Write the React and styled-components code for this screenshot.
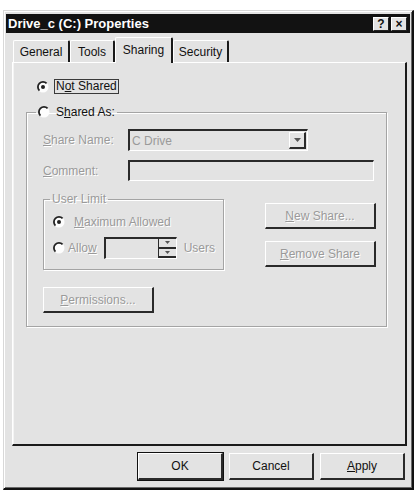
import styled, { createGlobalStyle } from "styled-components"

const Global = createGlobalStyle`
    body {
        margin: 0;
        background: #fff;
        font-family: "Liberation Sans", Arial, sans-serif;
        font-size: 12px;
        color: #111;
    }
`

const Janela = styled.div`
    box-sizing: border-box;
    margin: 10px 0 0 3px;
    width: 411px;
    height: 480px;
    background: #e3e3e3;
    border-top: 1px solid #d8d8d8;
    border-left: 1px solid #d8d8d8;
    border-right: 2px solid #111;
    border-bottom: 2px solid #111;
    box-shadow: inset 1px 1px 0 #fff, inset -1px -1px 0 #6a6a6a;
    padding: 3px 2px 2px 2px;
    display: flex;
    flex-direction: column;
`

const BarraTitulo = styled.div`
    height: 19px;
    background: #121212;
    color: #fff;
    font-weight: bold;
    font-size: 13px;
    display: flex;
    align-items: center;
    justify-content: space-between;
    padding: 0 3px 0 2px;
`

const BotoesTitulo = styled.div`
    display: flex;
    gap: 2px;
`

const BotaoTitulo = styled.div`
    box-sizing: border-box;
    width: 16px;
    height: 14px;
    background: #e3e3e3;
    color: #111;
    border-top: 1px solid #fff;
    border-left: 1px solid #fff;
    border-right: 1px solid #222;
    border-bottom: 1px solid #222;
    font-size: 12px;
    font-weight: bold;
    line-height: 12px;
    text-align: center;
`

const Corpo = styled.div`
    flex: 1;
    display: flex;
    flex-direction: column;
    padding: 4px 3px 0 6px;
`

const Abas = styled.div`
    display: flex;
    align-items: flex-end;
    height: 25px;
    padding-left: 1px;
`

const Aba = styled.div`
    box-sizing: border-box;
    width: ${p => p.$w}px;
    height: ${p => (p.$ativa ? 26 : 22)}px;
    margin-bottom: ${p => (p.$ativa ? -1 : 0)}px;
    position: relative;
    z-index: ${p => (p.$ativa ? 1 : 0)};
    background: #e3e3e3;
    border-top: 1px solid #fff;
    border-left: 1px solid #fff;
    border-right: 2px solid #1a1a1a;
    border-radius: 2px 2px 0 0;
    padding-top: ${p => (p.$ativa ? 5 : 4)}px;
    text-align: center;
`

const Painel = styled.div`
    box-sizing: border-box;
    height: 384px;
    border-top: 1px solid #fff;
    border-left: 1px solid #fff;
    border-right: 2px solid #1a1a1a;
    border-bottom: 2px solid #1a1a1a;
    box-shadow: inset 1px 0 0 #f4f4f4;
    padding: 16px 0 0 24px;
`

const LinhaRadio = styled.div`
    display: flex;
    align-items: center;
    gap: ${p => p.$gap ?? 5}px;
    color: ${p => (p.$off ? "#9a9a9a" : "#111")};
    text-shadow: ${p => (p.$off ? "1px 1px 0 #fff" : "none")};
`

const Foco = styled.span`
    border: 1px solid #3a3a3a;
    padding: 0 1px;
    line-height: 13px;
`

const Grupo = styled.fieldset`
    margin: 11px 0 0 ${p => p.$ml ?? 0}px;
    width: ${p => p.$w}px;
    box-sizing: border-box;
    padding: 0;
    border: 1px solid #a4a4a4;
    box-shadow: inset 1px 1px 0 #fff, 1px 1px 0 #fff;
    min-width: 0;
`

const Legenda = styled.legend`
    margin-left: ${p => p.$ml ?? 9}px;
    padding: 0 2px;
    color: ${p => (p.$off ? "#9a9a9a" : "#111")};
    text-shadow: ${p => (p.$off ? "1px 1px 0 #fff" : "none")};
    line-height: 14px;
`

const GrupoInterno = styled.div`
    padding: 10px 12px 13px 16px;
    display: flex;
    flex-direction: column;
`

const Campo = styled.div`
    display: flex;
    align-items: center;
    height: ${p => p.$h ?? 22}px;
    margin-top: ${p => p.$mt ?? 0}px;
`

const Rotulo = styled.span`
    width: 85px;
    flex-shrink: 0;
    color: #9a9a9a;
    text-shadow: 1px 1px 0 #fff;
`

const Caixa = styled.div`
    box-sizing: border-box;
    height: ${p => p.$h ?? 22}px;
    width: ${p => (p.$w ? `${p.$w}px` : "auto")};
    flex: ${p => (p.$w ? "none" : 1)};
    margin-left: ${p => p.$ml ?? 0}px;
    border-top: 2px solid #2a2a2a;
    border-left: 2px solid #2a2a2a;
    border-right: 1px solid #fff;
    border-bottom: 1px solid #fff;
    background: #e3e3e3;
    color: #9a9a9a;
    display: flex;
    align-items: center;
    justify-content: space-between;
    padding-left: 2px;
`

const BotaoSeta = styled.div`
    box-sizing: border-box;
    width: 17px;
    height: 17px;
    margin-right: 1px;
    border-top: 1px solid #fff;
    border-left: 1px solid #fff;
    border-right: 2px solid #2a2a2a;
    border-bottom: 2px solid #2a2a2a;
    display: flex;
    align-items: center;
    justify-content: center;
`

const Giro = styled.div`
    width: 17px;
    height: 100%;
    display: flex;
    flex-direction: column;
    border-left: 1px solid #2a2a2a;
`

const GiroMetade = styled.div`
    flex: 1;
    border-bottom: 2px solid #2a2a2a;
    display: flex;
    align-items: center;
    justify-content: center;
`

const Meio = styled.div`
    display: flex;
    align-items: flex-start;
    justify-content: space-between;
`

const LimiteInterno = styled.div`
    padding: 9px 8px 10px 9px;
    display: flex;
    flex-direction: column;
    gap: 8px;
`

const Sufixo = styled.span`
    margin-left: 4px;
`

const Coluna = styled.div`
    display: flex;
    flex-direction: column;
    gap: 12px;
    margin: 22px -2px 0 0;
`

const Botao = styled.div`
    box-sizing: border-box;
    width: ${p => p.$w}px;
    height: ${p => p.$h ?? 26}px;
    background: #e3e3e3;
    border-top: 1px solid #fff;
    border-left: 1px solid #fff;
    border-right: 2px solid #2a2a2a;
    border-bottom: 2px solid #2a2a2a;
    outline: ${p => (p.$padrao ? "1px solid #111" : "none")};
    display: flex;
    align-items: center;
    justify-content: center;
    color: ${p => (p.$off ? "#9a9a9a" : "#111")};
    text-shadow: ${p => (p.$off ? "1px 1px 0 #fff" : "none")};
    margin-top: ${p => p.$mt ?? 0}px;
`

const Rodape = styled.div`
    display: flex;
    justify-content: flex-end;
    gap: 6px;
    margin-top: 7px;
    padding-right: 2px;
`

// botão de opção no estilo clássico: arco escuro em cima/esquerda
const Radio = ({ marcado }) => (
    <svg width="12" height="12" viewBox="0 0 12 12">
        <circle cx="6" cy="6" r="5.5" fill="#fdfdfd" />
        <path d="M9.6 2.4 A5 5 0 0 0 2.4 9.6" stroke="#222" strokeWidth="1.8" fill="none" />
        {marcado && <circle cx="6" cy="6" r="2" fill="#222" />}
    </svg>
)

const Triangulo = ({ size = 7 }) => (
    <svg width={size} height={Math.ceil(size / 2)} viewBox="0 0 7 4">
        <path d="M0 0 H7 L3.5 4 Z" fill="#555" />
    </svg>
)

const App = () => {
    return (
        <>
            <Global />
            <Janela>
                <BarraTitulo>
                    <span>Drive_c (C:) Properties</span>
                    <BotoesTitulo>
                        <BotaoTitulo>?</BotaoTitulo>
                        <BotaoTitulo>×</BotaoTitulo>
                    </BotoesTitulo>
                </BarraTitulo>
                <Corpo>
                    <Abas>
                        <Aba $w={57}>General</Aba>
                        <Aba $w={45}>Tools</Aba>
                        <Aba $w={58} $ativa>Sharing</Aba>
                        <Aba $w={56}>Security</Aba>
                    </Abas>
                    <Painel>
                        <LinhaRadio>
                            <Radio marcado />
                            <Foco>N<u>o</u>t Shared</Foco>
                        </LinhaRadio>
                        <Grupo $w={361} $ml={-11}>
                            <Legenda $ml={9}>
                                <LinhaRadio $gap={6}>
                                    <Radio />
                                    <span>S<u>h</u>ared As:</span>
                                </LinhaRadio>
                            </Legenda>
                            <GrupoInterno>
                                <Campo>
                                    <Rotulo><u>S</u>hare Name:</Rotulo>
                                    <Caixa $w={180}>
                                        <span>C Drive</span>
                                        <BotaoSeta><Triangulo /></BotaoSeta>
                                    </Caixa>
                                </Campo>
                                <Campo $mt={9} $h={21}>
                                    <Rotulo><u>C</u>omment:</Rotulo>
                                    <Caixa $h={21} />
                                </Campo>
                                <Meio>
                                    <Grupo $w={181} $ml={0}>
                                        <Legenda $ml={6} $off>User Limit</Legenda>
                                        <LimiteInterno>
                                            <LinhaRadio $off $gap={9}>
                                                <Radio marcado />
                                                <span><u>M</u>aximum Allowed</span>
                                            </LinhaRadio>
                                            <LinhaRadio $off $gap={3}>
                                                <Radio />
                                                <span>Allo<u>w</u></span>
                                                <Caixa $w={73} $h={22} $ml={4}>
                                                    <span />
                                                    <Giro>
                                                        <GiroMetade><Triangulo size={5} /></GiroMetade>
                                                        <GiroMetade><Triangulo size={5} /></GiroMetade>
                                                    </Giro>
                                                </Caixa>
                                                <Sufixo>Users</Sufixo>
                                            </LinhaRadio>
                                        </LimiteInterno>
                                    </Grupo>
                                    <Coluna>
                                        <Botao $w={111} $off><u>N</u>ew Share...</Botao>
                                        <Botao $w={111} $off><u>R</u>emove Share</Botao>
                                    </Coluna>
                                </Meio>
                                <Botao $w={111} $off $mt={17}><u>P</u>ermissions...</Botao>
                            </GrupoInterno>
                        </Grupo>
                    </Painel>
                    <Rodape>
                        <Botao $w={85} $h={27} $padrao>OK</Botao>
                        <Botao $w={85} $h={27}>Cancel</Botao>
                        <Botao $w={85} $h={27}><u>A</u>pply</Botao>
                    </Rodape>
                </Corpo>
            </Janela>
        </>
    )
}

export default App
